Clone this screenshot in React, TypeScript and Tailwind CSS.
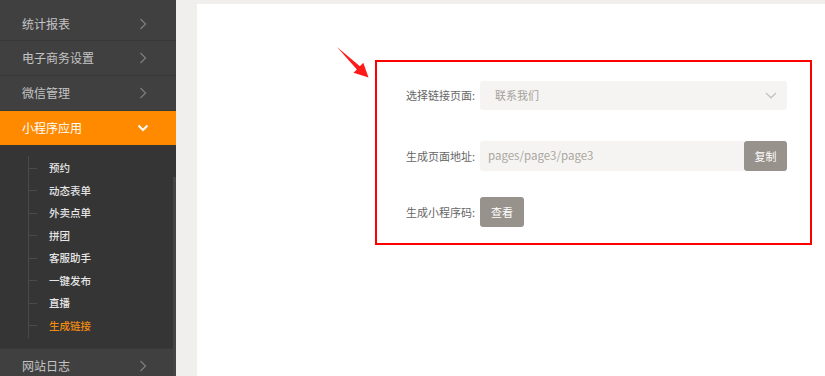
import { ReactNode } from 'react'

const font = { fontFamily: '"Noto Sans CJK SC", "Noto Sans", sans-serif' }

function ChevronRight() {
  return (
    <svg width="8" height="12" viewBox="0 0 8 12" fill="none" stroke="#7a7a7a" strokeWidth="1.4">
      <path d="M1.5 1 L6.5 6 L1.5 11" />
    </svg>
  )
}

function MenuRow({ label, className = '', children }: { label: string; className?: string; children?: ReactNode }) {
  return (
    <div className={`flex items-center justify-between pl-[22px] pr-[29px] border-b border-[#383838] text-[12px] text-[#c4c4c4] ${className}`}>
      <span>{label}</span>
      {children ?? <ChevronRight />}
    </div>
  )
}

const subItems = ['预约', '动态表单', '外卖点单', '拼团', '客服助手', '一键发布', '直播', '生成链接']

export default function App() {
  return (
    <div className="w-[825px] h-[376px] overflow-hidden flex bg-[#f0efed]" style={font}>
      {/* Sidebar */}
      <aside className="relative w-[176px] shrink-0 bg-[#404040]">
        <MenuRow label="统计报表" className="h-[41px] pt-[8px]" />
        <MenuRow label="电子商务设置" className="h-[35px]" />
        <MenuRow label="微信管理" className="h-[35px]" />
        <div className="h-[34px] flex items-center justify-between pl-[22px] pr-[27px] bg-[#ff8a00] text-[12px] text-white">
          <span>小程序应用</span>
          <svg width="12" height="8" viewBox="0 0 12 8" fill="none" stroke="#fff" strokeWidth="2">
            <path d="M1.5 1.5 L6 6 L10.5 1.5" />
          </svg>
        </div>

        {/* Submenu */}
        <div className="bg-[#353535] pt-[11px] pb-[10px]">
          <ul className="ml-[28px] border-l border-[#4a4a4a] py-[1px]">
            {subItems.map((item) => (
              <li key={item} className="h-[22.5px] flex items-center">
                <span className="w-[8px] h-px bg-[#4a4a4a]" />
                <span
                  className={`ml-[12px] text-[10.5px] font-medium ${
                    item === '生成链接' ? 'text-[#f08a10]' : 'text-[#e6e6e6]'
                  }`}
                >
                  {item}
                </span>
              </li>
            ))}
          </ul>
        </div>

        <MenuRow label="网站日志" className="h-[35px] border-t border-t-[#3a3a3a]" />

        {/* scrollbar */}
        <div className="absolute right-0 top-[177px] bottom-0 w-[3px] bg-[#454545]" />
      </aside>

      {/* Main */}
      <main className="flex-1 pl-[21px] pt-[4px]">
        <div className="relative h-full bg-white pl-[178px] pt-[56px]">
          {/* annotation arrow */}
          <svg className="absolute left-[133px] top-[34px]" width="45" height="45" viewBox="0 0 45 45">
            <polygon points="7,9 29.9,28.2 33.3,24.8 38.5,39.5 23.5,34.8 26.9,31.4" fill="#ff1a1a" />
          </svg>

          <div className="w-[437px] h-[185px] border-2 border-[#ff0000] pl-[29px] pt-[19px] text-[11px]">
            <div className="flex items-center">
              <span className="w-[74px] text-[#666]">选择链接页面:</span>
              <div className="w-[307px] h-[29px] rounded-[3px] bg-[#f5f4f2] flex items-center justify-between pl-[15px] pr-[10px] text-[#a5a19b]">
                <span>联系我们</span>
                <svg width="12" height="7" viewBox="0 0 12 7" fill="none" stroke="#c4c1bc" strokeWidth="1.2">
                  <path d="M1 1 L6 5.8 L11 1" />
                </svg>
              </div>
            </div>

            <div className="flex items-center mt-[31px]">
              <span className="w-[74px] text-[#666]">生成页面地址:</span>
              <div className="w-[264px] h-[30px] rounded-l-[3px] bg-[#f5f4f2] flex items-center pl-[8px] text-[#aaa6a0] text-[11.5px]">
                pages/page3/page3
              </div>
              <button className="w-[43px] h-[30px] rounded-[3px] bg-[#97928b] text-white text-[11px]">复制</button>
            </div>

            <div className="flex items-center mt-[26px]">
              <span className="w-[74px] text-[#666]">生成小程序码:</span>
              <button className="w-[44px] h-[30px] rounded-[3px] bg-[#97928b] text-white text-[11px]">查看</button>
            </div>
          </div>
        </div>
      </main>
    </div>
  )
}
